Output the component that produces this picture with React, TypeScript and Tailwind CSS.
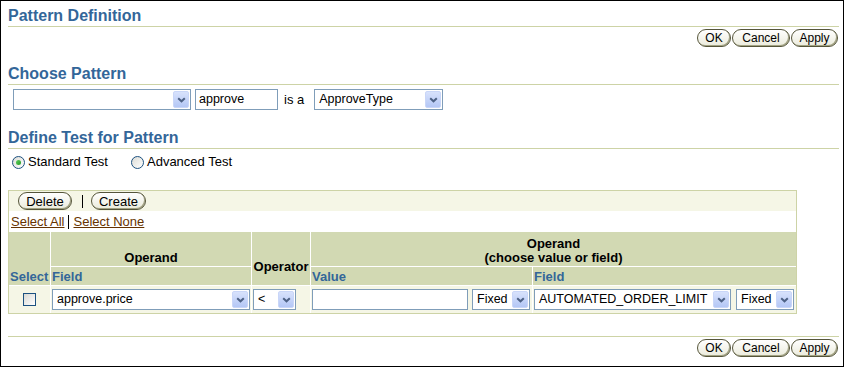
import React from "react"

const font = { fontFamily: '"Liberation Sans", Arial, sans-serif' }

function Chevron() {
  return (
    <svg width="9" height="6" viewBox="0 0 9 6">
      <path d="M1.2 1.2 L4.5 4.3 L7.8 1.2" fill="none" stroke="#4d6185" strokeWidth="2" />
    </svg>
  )
}

function Select({ value, className }: { value?: string; className: string }) {
  return (
    <div className={`flex h-[21px] items-stretch border border-[#7f9db9] bg-white p-px ${className}`}>
      <span className="flex-1 overflow-hidden whitespace-nowrap pl-[3px] text-[12.5px] leading-[17px] text-black">
        {value}
      </span>
      <span className="flex w-[16px] items-center justify-center rounded-[2px] border border-[#c9d6f8] bg-linear-to-b from-[#d8e2fc] to-[#b4c7f5]">
        <Chevron />
      </span>
    </div>
  )
}

function TextInput({ value, className }: { value?: string; className: string }) {
  return (
    <div
      className={`h-[21px] border border-[#7f9db9] bg-white pl-[3px] text-[12.5px] leading-[19px] text-black ${className}`}
    >
      {value}
    </div>
  )
}

function Btn({ label, className }: { label: string; className: string }) {
  return (
    <div
      className={`flex h-[18px] items-center justify-center rounded-[9px] border border-[#55553a] bg-linear-to-b from-white to-[#ebebdc] text-[12px] leading-none text-black shadow-[inset_-1px_-1px_0_#a3a383] ${className}`}
    >
      {label}
    </div>
  )
}

function Heading({ title, className }: { title: string; className: string }) {
  return (
    <div
      className={`border-b border-[#cdd3a6] pb-px text-[16px] font-bold leading-[18px] text-[#336699] ${className}`}
    >
      {title}
    </div>
  )
}

function ButtonRow({ className }: { className: string }) {
  return (
    <div className={`flex justify-end gap-px pr-px ${className}`}>
      <Btn label="OK" className="w-[34px]" />
      <Btn label="Cancel" className="w-[58px]" />
      <Btn label="Apply" className="w-[47px]" />
    </div>
  )
}

function Radio({ checked }: { checked?: boolean }) {
  return (
    <span className="flex h-[13px] w-[13px] items-center justify-center rounded-full border border-[#1c5180] bg-linear-to-br from-[#dcdcd6] to-white">
      {checked && (
        <span className="h-[5px] w-[5px] rounded-full bg-linear-to-br from-[#5fd05f] to-[#1f9a1f]" />
      )}
    </span>
  )
}

export default function App() {
  return (
    <div
      style={font}
      className="h-[367px] w-[844px] overflow-hidden border border-black bg-white pl-[7px] pr-[4px] text-black"
    >
      <Heading title="Pattern Definition" className="mt-[6px]" />
      <ButtonRow className="mt-[2px]" />

      <Heading title="Choose Pattern" className="mt-[18px]" />
      <div className="ml-[5px] mt-[4px] flex items-center">
        <Select className="w-[178px]" />
        <TextInput value="approve" className="ml-[4px] w-[83px]" />
        <span className="ml-[6px] text-[13px]">is a</span>
        <Select value="ApproveType" className="ml-[10px] w-[129px]" />
      </div>

      <Heading title="Define Test for Pattern" className="mt-[19px]" />
      <div className="mt-[5px] flex h-[16px] items-center pl-[4px] text-[13px] leading-[16px]">
        <Radio checked />
        <span className="ml-[3px]">Standard Test</span>
        <span className="ml-[23px]">
          <Radio />
        </span>
        <span className="ml-[3px]">Advanced Test</span>
      </div>

      <div className="mt-[20px] w-[789px] border border-[#cdd3a6]">
        <div className="flex h-[20px] items-center bg-[#f5f6e6] pl-[9px] text-[13px]">
          <Btn label="Delete" className="w-[54px] text-[13px]" />
          <span className="ml-[10px] mr-[8px] h-[13px] w-px bg-black" />
          <Btn label="Create" className="w-[55px] text-[13px]" />
        </div>
        <div className="flex h-[21px] items-center pl-[2px] text-[13px] text-[#663300]">
          <span className="underline">Select All</span>
          <span className="mx-[4px] h-[14px] w-px bg-black" />
          <span className="underline">Select None</span>
        </div>
        <div className="grid grid-cols-[41px_200px_58px_221px_263px] grid-rows-[34px_18px_27px] gap-px bg-white text-[13px] font-bold leading-[14px]">
          <div className="row-span-2 flex items-end bg-[#d2d9b3] pb-px pl-px text-[#336699]">Select</div>
          <div className="flex items-end justify-center bg-[#d2d9b3] pb-px">Operand</div>
          <div className="row-span-2 flex items-end justify-center bg-[#d2d9b3] pb-[11px]">Operator</div>
          <div className="col-span-2 flex flex-col items-center justify-end bg-[#d2d9b3] pb-px">
            <span>Operand</span>
            <span>(choose value or field)</span>
          </div>
          <div className="flex items-end bg-[#d2d9b3] pb-px pl-px text-[#336699]">Field</div>
          <div className="flex items-end bg-[#d2d9b3] pb-px pl-px text-[#336699]">Value</div>
          <div className="flex items-end bg-[#d2d9b3] pb-px pl-px text-[#336699]">Field</div>

          <div className="flex items-center justify-center bg-[#f5f6e6] font-normal">
            <span className="h-[13px] w-[13px] border border-[#1c5180] bg-linear-to-br from-[#d9d9d3] to-white" />
          </div>
          <div className="flex items-center bg-[#f5f6e6] px-px font-normal">
            <Select value="approve.price" className="w-full" />
          </div>
          <div className="flex items-center bg-[#f5f6e6] pl-px font-normal">
            <Select value="<" className="w-[43px]" />
          </div>
          <div className="flex items-center gap-[4px] bg-[#f5f6e6] pl-px font-normal">
            <TextInput className="w-[156px]" />
            <Select value="Fixed" className="w-[58px]" />
          </div>
          <div className="flex items-center gap-[5px] bg-[#f5f6e6] pl-px font-normal">
            <Select value="AUTOMATED_ORDER_LIMIT" className="w-[197px]" />
            <Select value="Fixed" className="w-[58px]" />
          </div>
        </div>
      </div>

      <div className="mt-[22px] border-t border-[#cdd3a6]" />
      <ButtonRow className="mt-[2px]" />
    </div>
  )
}
